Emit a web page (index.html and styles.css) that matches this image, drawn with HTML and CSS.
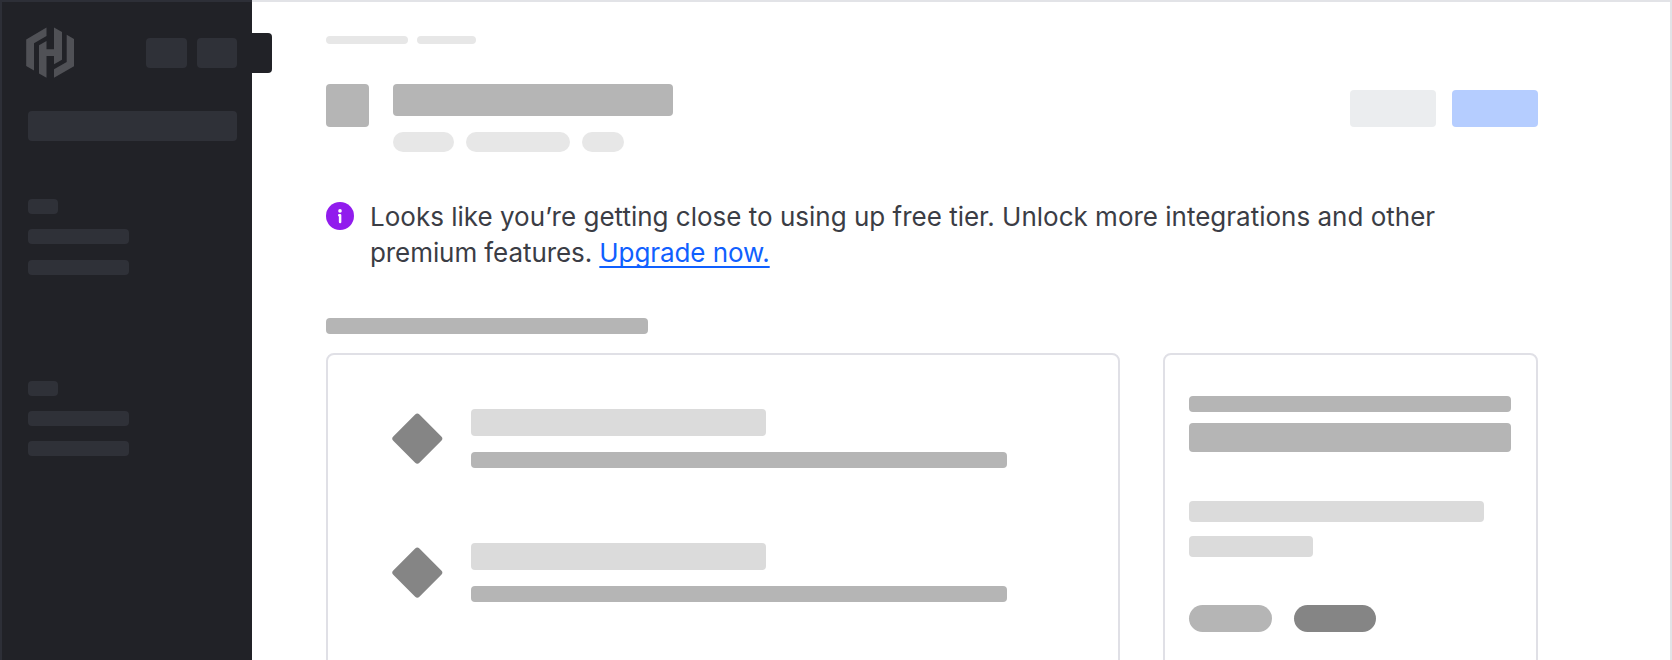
FILE: index.html
```html
<!DOCTYPE html>
<html lang="en">
<head>
<meta charset="utf-8">
<title>Inline alert</title>
<link rel="stylesheet" href="styles.css">
</head>
<body>
<div class="frame">
  <aside class="sidebar">
    <div class="side-top">
      <svg class="logo" width="48" height="51" viewBox="26 27 48 51" fill="#505156">
        <path d="M46.5 27.5V36L34 43.3V70.5L26.2 66V39.5Z"/>
        <path d="M39 45.3L46.5 41V49.3H54V27.5L62 32V59.7L54 64.2V56H46.5V77.8L39 73.4Z"/>
        <path d="M66.7 34.7L74 39V66.2L54 77.8V69.3L66.7 62Z"/>
      </svg>
      <div class="side-actions"><span class="side-btn"></span><span class="side-btn"></span></div>
    </div>
    <div class="side-search"></div>
    <div class="side-group"><span class="side-label"></span><span class="side-item"></span><span class="side-item"></span></div>
    <div class="side-group"><span class="side-label"></span><span class="side-item"></span><span class="side-item"></span></div>
    <div class="side-tab"></div>
  </aside>
  <main class="main">
    <div class="crumbs"><span class="crumb"></span><span class="crumb crumb-short"></span></div>
    <header class="header">
      <div class="avatar"></div>
      <div class="heading">
        <div class="title"></div>
        <div class="tags"><span class="tag"></span><span class="tag tag-wide"></span><span class="tag tag-small"></span></div>
      </div>
      <div class="actions"><span class="btn"></span><span class="btn btn-primary"></span></div>
    </header>
    <div class="alert">
      <svg class="alert-icon" width="28" height="28" viewBox="0 0 28 28">
        <circle cx="14" cy="14" r="14" fill="#911ced"/>
        <circle cx="14" cy="8.9" r="1.8" fill="#fff"/>
        <path d="M13.2 13.2H14.1V19.9" fill="none" stroke="#fff" stroke-width="2.5" stroke-linecap="round" stroke-linejoin="round"/>
      </svg>
      <p class="alert-text"><span class="line">Looks like you’re getting close to using up free tier. Unlock more integrations and other</span> <span class="line line-last">premium features. <a class="link" href="#">Upgrade now.</a></span></p>
    </div>
    <div class="section-title"></div>
    <div class="cards">
      <section class="card card-list">
        <div class="row"><span class="diamond"></span><div class="row-body"><div class="row-title"></div><div class="row-text"></div></div></div>
        <div class="row"><span class="diamond"></span><div class="row-body"><div class="row-title"></div><div class="row-text"></div></div></div>
      </section>
      <section class="card card-side">
        <div class="bar"></div>
        <div class="bar bar-tall"></div>
        <div class="bar bar-light"></div>
        <div class="bar bar-light bar-short"></div>
        <div class="pills"><span class="pill"></span><span class="pill pill-dark"></span></div>
      </section>
    </div>
  </main>
</div>
</body>
</html>
```
FILE: styles.css
```css
* { box-sizing: border-box; }
body { margin: 0; font-family: Inter, "Liberation Sans", sans-serif; }
.frame { position: relative; display: flex; width: 1672px; height: 660px; overflow: hidden; background: #fff; }
.frame::after { content: ""; position: absolute; inset: 0; border: solid rgba(101, 106, 130, .19); border-width: 2px 2px 0; pointer-events: none; }

.sidebar { position: relative; flex: none; width: 252px; padding: 27px 15px 0 26px; background: #212227; }
.side-top { display: flex; justify-content: space-between; height: 51px; }
.logo { display: block; }
.side-actions { display: flex; gap: 10px; padding-top: 11px; }
.side-btn { width: 40.5px; height: 30px; border-radius: 4px; background: #2f3138; }
.side-search { height: 30px; margin: 33px 0 58px 2px; border-radius: 4px; background: #2f3138; }
.side-group { display: flex; flex-direction: column; gap: 15.3px; height: 181.6px; padding-left: 2px; }
.side-label, .side-item { width: 30px; height: 15px; border-radius: 4px; background: #2f3138; }
.side-item { width: 100.5px; }
.side-tab { position: absolute; left: 252px; top: 33px; width: 20px; height: 40px; border-radius: 0 4px 4px 0; background: #212227; }

.main { flex: 1; padding: 36px 134px 0 74px; }
.crumbs { display: flex; gap: 9px; }
.crumb { width: 82px; height: 8px; border-radius: 4px; background: #e7e7e7; }
.crumb-short { width: 59px; }
.header { display: flex; margin-top: 40px; height: 68px; }
.avatar { width: 43px; height: 43px; border-radius: 4px; background: #b5b5b5; }
.heading { margin-left: 24px; }
.title { width: 280px; height: 32px; border-radius: 4px; background: #b5b5b5; }
.tags { display: flex; gap: 12px; margin-top: 16px; }
.tag { width: 61px; height: 20px; border-radius: 10px; background: #e7e7e7; }
.tag-wide { width: 104px; }
.tag-small { width: 42px; }
.actions { display: flex; gap: 16px; margin-left: auto; padding-top: 6px; }
.btn { width: 86px; height: 37px; border-radius: 4px; background: #ebedef; }
.btn-primary { background: #b5cdff; }

.alert { display: flex; gap: 16px; margin-top: 50px; height: 116px; }
.alert-icon { flex: none; }
.alert-text { margin: -3px 0 0; font-size: 26px; line-height: 36px; color: #3b3d45; white-space: nowrap; }
.line { display: block; }
.line-last { letter-spacing: -.08px; }
.link { color: #1060ff; text-decoration: underline; text-decoration-thickness: 1.5px; text-underline-offset: 4px; text-decoration-skip-ink: none; }

.section-title { width: 322px; height: 16px; border-radius: 4px; background: #b5b5b5; }
.cards { display: flex; gap: 43px; margin-top: 19px; height: 340px; }
.card { border: 2px solid #e0e0e6; border-radius: 8px; }
.card-list { width: 794px; padding: 54px 64px 0; }
.row { display: flex; gap: 35.4px; height: 134px; }
.diamond { width: 36.6px; height: 36.6px; margin: 11.2px 0 0 6.7px; border-radius: 3px; background: #858585; transform: rotate(45deg); }
.row-title { width: 295px; height: 27px; border-radius: 4px; background: #dbdbdb; }
.row-text { width: 536px; height: 16px; margin-top: 16px; border-radius: 4px; background: #b5b5b5; }
.card-side { flex: 1; padding: 41px 25px 0 24px; }
.bar { height: 16px; border-radius: 4px; background: #b5b5b5; }
.bar-tall { height: 29px; margin-top: 11px; }
.bar-light { width: 295px; height: 21px; margin-top: 49px; background: #dbdbdb; }
.bar-short { width: 124px; margin-top: 14px; }
.pills { display: flex; gap: 22px; margin-top: 48px; }
.pill { width: 82.5px; height: 27px; border-radius: 14px; background: #b5b5b5; }
.pill-dark { background: #858585; }
```
